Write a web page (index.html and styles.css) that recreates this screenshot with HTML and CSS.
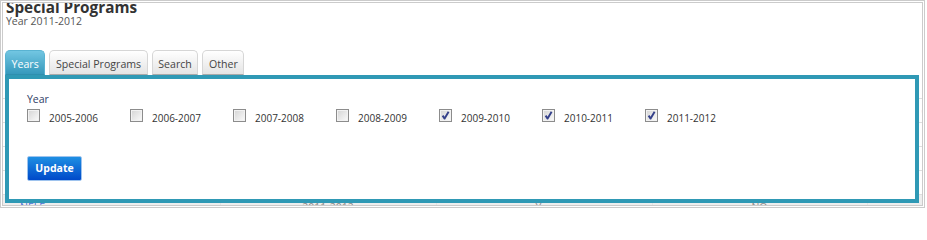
FILE: index.html
```html
<!DOCTYPE html>
<html>
<head>
<meta charset="utf-8">
<link rel="stylesheet" href="styles.css">
</head>
<body>
<div class="frame">
  <h1 class="title">Special Programs</h1>
  <div class="subtitle">Year 2011-2012</div>
  <ul class="tabs">
    <li class="tab active">Years</li>
    <li class="tab">Special Programs</li>
    <li class="tab">Search</li>
    <li class="tab">Other</li>
  </ul>
  <div class="content">
    <table class="grid">
      <colgroup>
        <col class="c1"><col class="c2"><col class="c3"><col class="c4"><col class="c5">
      </colgroup>
      <tr><td class="first"></td><td></td><td></td><td></td><td></td></tr>
      <tr><td class="first"></td><td></td><td></td><td></td><td class="last"><a class="link">Copy</a></td></tr>
      <tr><td class="first"></td><td></td><td></td><td></td><td></td></tr>
      <tr><td class="first"></td><td></td><td></td><td></td><td></td></tr>
      <tr><td class="first"></td><td></td><td></td><td></td><td></td></tr>
      <tr class="shaded"><td class="first"><a class="link">NELF</a></td><td>2011-2012</td><td>Yes</td><td>NO</td><td></td></tr>
    </table>
    <div class="panel">
      <div class="field-label">Year</div>
      <div class="years">
        <label class="year"><span class="box"></span><span class="yl">2005-2006</span></label>
        <label class="year"><span class="box"></span><span class="yl">2006-2007</span></label>
        <label class="year"><span class="box"></span><span class="yl">2007-2008</span></label>
        <label class="year"><span class="box"></span><span class="yl">2008-2009</span></label>
        <label class="year"><span class="box"><svg viewBox="0 0 11 11" width="11" height="11"><path d="M2.6 5.6 L4.6 8.6 L8.6 1.8" fill="none" stroke="#34408a" stroke-width="1.9" stroke-linejoin="round"/></svg></span><span class="yl">2009-2010</span></label>
        <label class="year"><span class="box"><svg viewBox="0 0 11 11" width="11" height="11"><path d="M2.6 5.6 L4.6 8.6 L8.6 1.8" fill="none" stroke="#34408a" stroke-width="1.9" stroke-linejoin="round"/></svg></span><span class="yl">2010-2011</span></label>
        <label class="year"><span class="box"><svg viewBox="0 0 11 11" width="11" height="11"><path d="M2.6 5.6 L4.6 8.6 L8.6 1.8" fill="none" stroke="#34408a" stroke-width="1.9" stroke-linejoin="round"/></svg></span><span class="yl">2011-2012</span></label>
      </div>
      <button class="update">Update</button>
    </div>
  </div>
</div>
</body>
</html>
```
FILE: styles.css
```css
html, body {
  margin: 0;
  padding: 0;
}
body {
  width: 927px;
  height: 209px;
  overflow: hidden;
  background: #fff;
  font-family: "Open Sans", "DejaVu Sans", sans-serif;
}
.frame {
  width: 925px;
  height: 208px;
  box-sizing: border-box;
  border: 3px double #cbcbcb;
  overflow: hidden;
}
.title {
  margin: -4px 0 0 3px;
  font-size: 15.3px;
  line-height: 16px;
  font-weight: 700;
  color: #333;
}
.subtitle {
  margin: 0 0 0 3px;
  font-size: 10.5px;
  line-height: 13px;
  color: #555;
}
.tabs {
  list-style: none;
  margin: 22px 0 0 2px;
  padding: 0;
  display: flex;
  gap: 4px;
}
.tab {
  box-sizing: border-box;
  height: 25px;
  padding: 6px 5.6px 0;
  font-size: 10.6px;
  line-height: 14px;
  color: #444;
  border: 1px solid #d6d6d6;
  border-bottom: 1px solid #a9a9a9;
  border-radius: 5px 5px 0 0;
  background: linear-gradient(#ffffff, #e4e4e4);
}
.tab.active {
  color: #fff;
  border-color: #59b3d2;
  border-bottom-color: #2f8fae;
  background: linear-gradient(#72c6e2, #3699bc);
}
.content {
  position: relative;
}
.grid {
  border-collapse: collapse;
  table-layout: fixed;
  width: 1000px;
  font-size: 10.5px;
  color: #8a8a8a;
}
.c1 { width: 217px; }
.c2 { width: 216px; }
.c3 { width: 216px; }
.c4 { width: 215px; }
.c5 { width: 136px; }
.grid td {
  height: 23px;
  padding: 0;
  border-bottom: 1px solid #dedede;
  border-right: 1px solid #e4e4e4;
  text-align: center;
  vertical-align: middle;
}
.grid td.first {
  text-align: left;
  padding-left: 17px;
}
.grid td.last {
  text-align: left;
  padding-left: 54px;
}
.grid tr.shaded td {
  background: #eeeeee;
}
.link {
  color: #4a72d6;
}
.panel {
  position: absolute;
  top: 0;
  left: 2px;
  width: 914px;
  height: 128px;
  box-sizing: border-box;
  border: 4px solid #2f99b5;
  background: #fff;
  padding: 14px 0 0 18px;
}
.field-label {
  font-size: 10.5px;
  line-height: 13px;
  color: #2e3d66;
}
.years {
  display: flex;
  margin-top: 3px;
}
.year {
  width: 103px;
  display: flex;
  align-items: flex-start;
}
.box {
  width: 13px;
  height: 13px;
  box-sizing: border-box;
  border: 1px solid #8c8c8c;
  background: linear-gradient(135deg, #d4d4d4, #fbfbfb);
  box-shadow: inset 0 0 0 1px #f2f2f2;
  display: flex;
  align-items: center;
  justify-content: center;
}
.yl {
  margin-left: 9px;
  padding-top: 3px;
  font-size: 10px;
  line-height: 13px;
  color: #333;
}
.update {
  display: block;
  margin-top: 31px;
  width: 55px;
  height: 25px;
  padding: 0;
  border: 1px solid #9ec3ee;
  border-radius: 2px;
  background: linear-gradient(#1e8fe3, #0049c9);
  color: #fff;
  font-family: "Open Sans", "DejaVu Sans", sans-serif;
  font-weight: 700;
  font-size: 10.5px;
  line-height: 23px;
  text-align: center;
}
```
